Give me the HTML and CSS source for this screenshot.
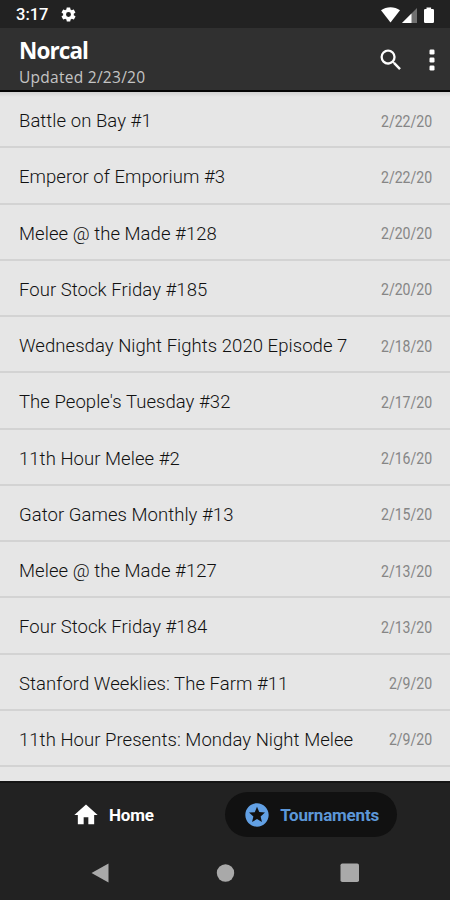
FILE: index.html
```html
<!DOCTYPE html>
<html lang="en">

<head>
    <meta charset="UTF-8">
    <meta name="viewport" content="width=device-width, initial-scale=1.0">
    <title>Norcal</title>
    <link rel="stylesheet" href="styles.css">
</head>

<body>

    <div class="status-bar">
        <span class="clock">3:17</span>
        <svg class="gear" width="17" height="17" viewBox="0 0 24 24">
            <path fill-rule="evenodd" d="M19.4 13c0-.3.1-.6.1-1s0-.7-.1-1l2.1-1.6c.2-.2.3-.4.1-.7l-2-3.4c-.1-.3-.4-.3-.6-.3l-2.5 1c-.5-.4-1.1-.7-1.700-1l-.4-2.600c0-.2-.2-.4-.5-.4h-4c-.2 0-.4.2-.5.4L9 5c-.6.3-1.100.6-1.700 1L4.900 5c-.2 0-.5 0-.6.3l-2 3.400c-.2.3-.1.5.1.7L4.500 11c0 .3-.1.6-.1 1s0 .7.1 1l-2.100 1.600c-.2.2-.3.4-.1.7l2 3.400c.1.3.4.3.6.3l2.500-1c.5.4 1.100.7 1.700 1l.4 2.600c0 .2.2.4.5.4h4c.2 0 .4-.2.5-.4L15 19c.6-.3 1.100-.6 1.700-1l2.500 1c.2.1.5 0 .6-.3l2-3.400c.1-.3.1-.5-.1-.7L19.400 13zM12 8.500a3.500 3.500 0 1 0 0 7 3.500 3.500 0 0 0 0-7z"/>
        </svg>
        <svg class="signals" width="54" height="18" viewBox="0 0 54 18">
            <path d="M0 4.300C5.500.3 13.500.3 19 4.300L9.500 16.500z"/>
            <path class="dim" d="M36 2v15H21z"/>
            <path d="M30.500 7.500V17H21z"/>
            <path d="M45.500 1.500h4.600V3h1.600q1.300 0 1.300 1.300v11.400q0 1.300-1.300 1.300h-7.400q-1.300 0-1.300-1.300V4.300Q43 3 44.300 3H45.500z"/>
        </svg>
    </div>

    <header class="toolbar">
        <div class="titles">
            <h1>Norcal</h1>
            <p>Updated 2/23/20</p>
        </div>
        <svg class="search" width="28" height="28" viewBox="0 0 24 24">
            <path d="M15.500 14h-.79l-.28-.27A6.470 6.470 0 0 0 16 9.500 6.500 6.500 0 1 0 9.500 16c1.610 0 3.090-.59 4.230-1.570l.27.28v.79l5 4.990L20.490 19l-4.990-5zm-6 0C7.010 14 5 11.990 5 9.500S7.010 5 9.500 5 14 7.010 14 9.500 11.990 14 9.500 14z"/>
        </svg>
        <svg class="more" width="6" height="24" viewBox="0 0 6 24">
            <rect x=".5" y="1.500" width="5" height="5" rx="1.200"/>
            <rect x=".5" y="9.500" width="5" height="5" rx="1.200"/>
            <rect x=".5" y="17.500" width="5" height="5" rx="1.200"/>
        </svg>
    </header>

    <ul class="tournaments">
        <li><span class="name">Battle on Bay #1</span><span class="date">2/22/20</span></li>
        <li><span class="name">Emperor of Emporium #3</span><span class="date">2/22/20</span></li>
        <li><span class="name">Melee @ the Made #128</span><span class="date">2/20/20</span></li>
        <li><span class="name">Four Stock Friday #185</span><span class="date">2/20/20</span></li>
        <li><span class="name">Wednesday Night Fights 2020 Episode 7</span><span class="date">2/18/20</span></li>
        <li><span class="name">The People's Tuesday #32</span><span class="date">2/17/20</span></li>
        <li><span class="name">11th Hour Melee #2</span><span class="date">2/16/20</span></li>
        <li><span class="name">Gator Games Monthly #13</span><span class="date">2/15/20</span></li>
        <li><span class="name">Melee @ the Made #127</span><span class="date">2/13/20</span></li>
        <li><span class="name">Four Stock Friday #184</span><span class="date">2/13/20</span></li>
        <li><span class="name">Stanford Weeklies: The Farm #11</span><span class="date">2/9/20</span></li>
        <li><span class="name">11th Hour Presents: Monday Night Melee</span><span class="date">2/9/20</span></li>
    </ul>

    <nav class="tabs">
        <a class="tab">
            <svg width="28" height="28" viewBox="0 0 24 24">
                <path d="M10 20v-6h4v6h5v-8h3L12 3 2 12h3v8z"/>
            </svg>
            Home
        </a>
        <a class="tab active">
            <svg width="28" height="28" viewBox="0 0 24 24">
                <path d="M11.990 2C6.470 2 2 6.480 2 12s4.470 10 9.990 10C17.520 22 22 17.520 22 12S17.520 2 11.990 2zm4.240 16L12 15.450 7.770 18l1.120-4.810-3.730-3.230 4.920-.42L12 5l1.920 4.530 4.920.42-3.730 3.230L16.230 18z"/>
            </svg>
            Tournaments
        </a>
    </nav>

    <div class="system-nav">
        <svg width="20" height="20" viewBox="0 0 20 20"><path d="M18.500.5v19L1.500 10z"/></svg>
        <svg width="20" height="20" viewBox="0 0 20 20"><circle cx="10.500" cy="10" r="8.700"/></svg>
        <svg width="20" height="20" viewBox="0 0 20 20"><rect x=".5" y=".5" width="18.500" height="18.500" rx="1.800"/></svg>
    </div>

</body>

</html>
```
FILE: styles.css
```css
body {
    height: 900px;
    margin: 0;
    display: flex;
    flex-direction: column;
    overflow: hidden;
    font-family: Roboto, sans-serif;
    background-color: #222;
}

svg {
    display: block;
    flex: none;
    fill: #fff;
}

.status-bar {
    flex: none;
    height: 28px;
    box-sizing: border-box;
    padding: 1px 15px 0 16px;
    display: flex;
    align-items: center;
    color: #fff;
}

.clock {
    width: 44px;
    font-size: 16.500px;
    font-weight: 500;
}

.signals {
    margin-left: auto;
}

.signals .dim {
    fill: #707070;
}

.toolbar {
    flex: none;
    height: 64px;
    box-sizing: border-box;
    padding: 1px 15px 0 19px;
    display: flex;
    align-items: center;
    background-color: #303030;
    border-bottom: 2px solid #050505;
    color: #fff;
    font-family: "Open Sans", sans-serif;
}

.titles {
    flex: 1;
    padding-top: 6px;
}

.titles h1 {
    margin: 0;
    font-size: 22.500px;
    font-weight: 700;
    line-height: 28px;
    letter-spacing: -0.900px;
}

.titles p {
    margin: 0;
    font-size: 15.500px;
    line-height: 24px;
    letter-spacing: 0.270px;
    color: #c4c4c4;
}

.search {
    margin-right: 24px;
}

.tournaments {
    flex: 1;
    min-height: 0;
    margin: 0;
    padding: 0;
    list-style: none;
    overflow: hidden;
    background: linear-gradient(#d2d2d2, #e6e6e6 5px);
}

.tournaments li {
    height: 56.250px;
    box-sizing: border-box;
    padding: 4px 18px 0 19px;
    display: flex;
    align-items: center;
    justify-content: space-between;
    border-bottom: 2px solid #d3d3d3;
    white-space: nowrap;
}

.name {
    font-size: 18.500px;
    font-weight: 300;
    letter-spacing: 0.050px;
    color: #111;
}

/* narrow numerals, kept flush with the right edge */
.date {
    font-size: 16px;
    color: #858585;
    transform: scaleX(0.880);
    transform-origin: right;
}

.tabs {
    flex: none;
    height: 65px;
    box-sizing: border-box;
    padding: 0 53px 0 54px;
    display: flex;
    align-items: center;
    justify-content: space-between;
    border-top: 2px solid #151515;
}

.tab {
    height: 45px;
    box-sizing: border-box;
    padding: 0 18px;
    display: flex;
    align-items: center;
    gap: 9px;
    border-radius: 23px;
    font-size: 17px;
    font-weight: 700;
    letter-spacing: -0.200px;
    color: #fff;
}

.active {
    background-color: #111;
    color: #5c97d8;
}

.active svg {
    fill: #62a0e4;
}

.system-nav {
    flex: none;
    height: 54px;
    padding: 0 90px;
    display: flex;
    align-items: center;
    justify-content: space-between;
}

.system-nav svg {
    fill: #a9a9a9;
}
```
